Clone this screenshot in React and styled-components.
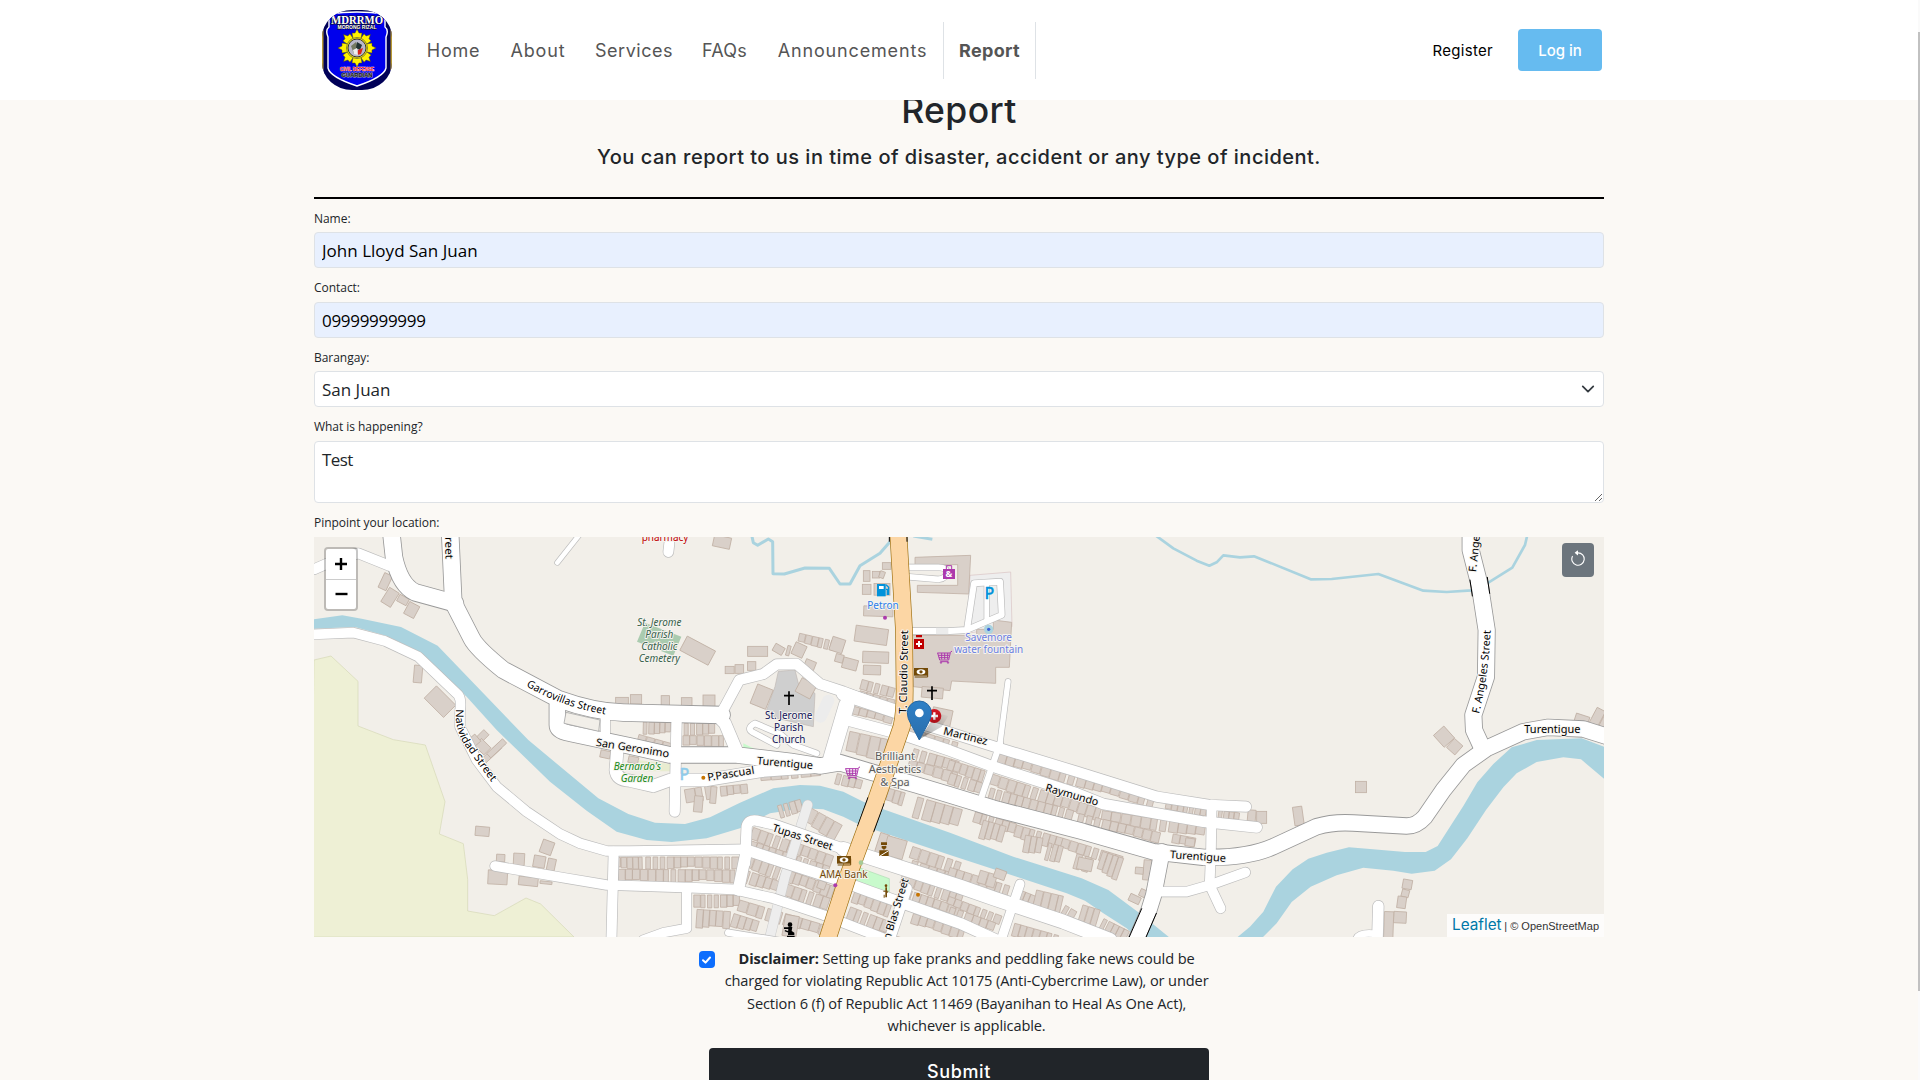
import React from "react";
import styled, { createGlobalStyle, css } from "styled-components";

const display = `Inter, "Open Sans", sans-serif`;
const body = `"Open Sans", "Noto Sans", sans-serif`;

const Global = createGlobalStyle`
  *, *::before, *::after { box-sizing: border-box; }
  html, body { margin: 0; height: 100%; overflow: hidden; }
  body { background: #fbf9f5; color: #212529; font-family: ${body}; }
`;

const Page = styled.div`
  height: 1080px;
  overflow: hidden;
  background: #fbf9f5;
`;
const Header = styled.header`
  position: relative;
  z-index: 2;
  height: 100px;
  background: #fff;
`;
const Bar = styled.div`
  width: 1290px;
  height: 100px;
  margin-left: 314px;
  padding: 0 2px 0 8px;
  display: flex;
  align-items: center;
`;
const Nav = styled.nav`
  display: flex;
  align-items: center;
  margin-left: 20px;
  flex: 1;
`;
const NavLink = styled.a`
  box-sizing: content-box;
  width: ${(p) => p.$w}px;
  height: 57px;
  padding: 0 15px;
  display: flex;
  align-items: center;
  justify-content: center;
  white-space: nowrap;
  color: #555;
  font: 400 18px ${display};
  letter-spacing: ${(p) => p.$ls || 0}px;
  ${(p) =>
    p.$active &&
    css`
      font-weight: 700;
      border: solid #dee2e6;
      border-width: 0 1px;
    `}
`;
const Register = styled.a`
  font: 400 15px ${display};
  color: #000;
  margin-right: 25px;
  letter-spacing: 0.3px;
`;
const Login = styled.button`
  width: 84px;
  height: 42px;
  border: 0;
  border-radius: 4px;
  background: #66bbf0;
  color: #fff;
  font: 500 15px ${display};
`;

const Main = styled.main`
  width: 1290px;
  margin-left: 314px;
  display: flex;
  flex-direction: column;
`;
const Title = styled.h1`
  margin: -13px 0 0;
  text-align: center;
  font: 500 35.5px/48px ${display};
  letter-spacing: 0.4px;
`;
const Subtitle = styled.p`
  margin: 7px 0 0;
  height: 31px;
  text-align: center;
  white-space: nowrap;
  font: 500 20px/31px ${display};
  letter-spacing: 0.49px;
`;
const Rule = styled.hr`
  margin: 24px 0 0;
  width: 100%;
  border: 0;
  height: 2px;
  background: #000;
`;
const Field = styled.label`
  display: flex;
  flex-direction: column;
  height: ${(p) => p.$h}px;
`;
const Caption = styled.span`
  flex: 1;
  display: flex;
  align-items: center;
  padding-top: 5px;
  font-size: 12px;
  letter-spacing: -0.04px;
`;
const control = css`
  width: 100%;
  border: 1px solid #dee2e6;
  border-radius: 4px;
  padding: 0 7px;
  font: 400 17px/27px ${body};
  letter-spacing: ${(p) => p.$ls ?? -0.4}px;
  color: #212529;
  outline: 0;
`;
const Input = styled.input`
  ${control}
  height: 36px;
  color: #000;
  background: #e8f0fe;
`;
const Select = styled.div`
  ${control}
  height: 36px;
  background: #fff;
  display: flex;
  align-items: center;
  justify-content: space-between;
  padding-right: 8px;
`;
const Area = styled.textarea`
  ${control}
  height: 62px;
  padding-top: 4px;
  background: #fff;
  resize: vertical;
  display: block;
`;
const MapCaption = styled(Caption)`
  flex: none;
  height: 34px;
`;

const MapBox = styled.section`
  position: relative;
  width: 1290px;
  height: 400px;
  overflow: hidden;
  background: #f2efe9;
  > svg { display: block; }
`;
const ZoomControl = styled.div`
  position: absolute;
  left: 10px;
  top: 10px;
  width: 34px;
  height: 64px;
  border: 2px solid rgba(0, 0, 0, 0.22);
  border-radius: 4px;
  background: #fff;
  background-clip: padding-box;
`;
const ZoomButton = styled.button`
  display: flex;
  align-items: center;
  justify-content: center;
  width: 30px;
  height: 30px;
  padding: 0;
  border: 0;
  background: none;
  & + & { border-top: 1px solid #ccc; padding-bottom: 2px; }
`;
const Reset = styled.button`
  position: absolute;
  right: 10px;
  top: 6px;
  width: 32px;
  height: 34px;
  padding: 0 0 2px;
  border: 0;
  border-radius: 4px;
  background: #6c757d;
  display: flex;
  align-items: center;
  justify-content: center;
`;
const Attribution = styled.div`
  position: absolute;
  right: 0;
  bottom: 0;
  width: 157px;
  height: 23px;
  padding: 0 5px;
  display: flex;
  align-items: center;
  justify-content: space-between;
  white-space: nowrap;
  background: rgba(255, 255, 255, 0.8);
  font: 11px "Liberation Sans", Arial, sans-serif;
  color: #333;
`;
const Leaflet = styled.a`
  font: 400 15.3px ${display};
  color: #0078a8;
  margin-top: -2px;
`;

const Consent = styled.label`
  display: flex;
  align-self: center;
  width: 510px;
  margin: 10px 0 0 -11px;
  gap: 10px;
`;
const Check = styled.span`
  width: 17px;
  height: 17px;
  margin-top: 4px;
  border-radius: 4px;
  background: #0d6efd;
  display: flex;
  align-items: center;
  justify-content: center;
`;
const Notice = styled.p`
  margin: 0;
  flex: 1;
  height: 91px;
  text-align: center;
  white-space: nowrap;
  font-size: 14.6px;
  line-height: 22.4px;
  letter-spacing: -0.12px;
`;
const Submit = styled.button`
  align-self: center;
  width: 500px;
  height: 46px;
  margin-top: 10px;
  border: 0;
  border-radius: 4px;
  background: #212529;
  color: #fff;
  font: 500 18px/46px ${display};
  letter-spacing: 0.6px;
`;
const ScrollTrack = styled.div`
  position: fixed;
  z-index: 5;
  right: 0;
  top: 0;
  width: 2px;
  height: 1080px;
  background: #fafafa;
`;
const ScrollThumb = styled.div`
  margin-top: 32px;
  height: 959px;
  background: #c1c1c1;
`;

function Logo() {
  const rays = Array.from({ length: 8 }, (_, i) => i * 45);
  return (
    <svg width="70" height="80" viewBox="0 0 70 80">
      <defs>
        <clipPath id="oval"><rect width="70" height="80" rx="30" ry="27" /></clipPath>
      </defs>
      <g clipPath="url(#oval)">
        <rect width="70" height="80" fill="#000058" />
        <path d="M0 20h1.500v40H0zM68.500 20h1.500v40h-1.500z" fill="#b99a35" />
        <path d="M7 4Q35 0 63 4V17Q67 20 64 27V58Q62 67 35 76Q8 67 6 58V27Q3 20 7 17Z" fill="#0000ec" stroke="#fff" strokeWidth="1.400" />
        <g transform="translate(35 38)" fill="#fff200">
          {rays.map((r) => (
            <path key={r} transform={`rotate(${r})`} d="M-4-9L-5-15L-2-15L0-19L2-15L5-15L4-9Z" stroke="#4b4a00" strokeWidth=".5" />
          ))}
          <circle r="10.500" stroke="#554" strokeWidth=".7" />
          <circle r="9" fill="#b9b8c9" stroke="#333" />
          <path d="M-6-2L-1-6L1 0L-3 6Z" fill="#757a62" />
          <path d="M0-6L5-3L3 2L-1 0Z" fill="#233" />
          <path d="M1 2L6 0L4 6L0 7Z" fill="#d7261c" />
          <path d="M-4 2L0 0L1 7L-3 6Z" fill="#eee" />
        </g>
        <text x="35" y="14" textAnchor="middle" fontFamily="Liberation Serif" fontWeight="700" fontSize="12.500" textLength="52" lengthAdjust="spacingAndGlyphs" fill="#fff" stroke="#111" strokeWidth="1.200" paintOrder="stroke">MDRRMO</text>
        <text x="35" y="18.700" textAnchor="middle" fontFamily="Liberation Sans" fontWeight="700" fontSize="4.800" textLength="39" lengthAdjust="spacingAndGlyphs" fill="#fff" stroke="#111" strokeWidth=".8" paintOrder="stroke">MORONG RIZAL</text>
        <text x="35" y="61" textAnchor="middle" fontFamily="Liberation Sans" fontWeight="700" fontSize="5" textLength="34" lengthAdjust="spacingAndGlyphs" fill="#ff2020" stroke="#eee" strokeWidth=".6" paintOrder="stroke">CIVIL DEFENSE</text>
        <text x="35" y="67" textAnchor="middle" fontFamily="Liberation Sans" fontWeight="700" fontSize="6" textLength="31" lengthAdjust="spacingAndGlyphs" fill="#111" stroke="#aaa" strokeWidth="1" paintOrder="stroke">GUARDIAN</text>
      </g>
    </svg>
  );
}

/* Street casings and fills: [path, width]. Three map units per pixel. */
const roads = [
  ["M12 118L80 88L145 70L240 108", 30],
  ["M810 12L742 98", 14],
  ["M1078 40L1075 66", 30],
  ["M12 313L130 308L225 333L325 380L445 495Q455 510 450 545L450 590L500 690L560 770L650 845L750 912L810 940L890 963H960L1290 958", 29],
  ["M1305 1000L1310 890Q1315 868 1340 872L1390 883L1610 960", 31],
  ["M1600 957L1950 1070L2050 1105L2260 1175L2400 1230", 42],
  ["M1310 960L1430 1000L1580 1048L1680 1085L1950 1180L2060 1230", 33],
  ["M555 1008L770 1045L890 1065L1140 1073L1270 1078L1390 1105L1540 1155L1720 1225", 29],
  ["M1310 960L1285 1080", 34],
  ["M911 965L904 1240", 30],
  ["M1130 1075V1195L1060 1208L1000 1230", 28],
  ["M1255 1208L1420 1235", 20],
  ["M1100 560L1094 845", 31],
  ["M886 550L886 630", 28],
  ["M1230 555L1245 530L1288 450L1360 432L1400 403L1460 402L1530 462L1600 485L1760 545L1820 577L1920 608L2070 655L2300 725L2540 800L2700 825L2808 830", 31],
  ["M1600 492L1760 545", 40],
  ["M1220 555L1245 580L1285 675", 37],
  ["M1560 695L1610 525", 46],
  ["M1610 570L1780 615L1920 662L2050 710L2300 790L2380 822L2680 875L2840 892", 32],
  ["M922 660L917 720Q920 750 960 752L1030 768L1080 750L1190 750L1360 722L1530 710", 37],
  ["M1400 645L1328 607Q1308 595 1335 580L1410 612L1450 645L1520 670", 17],
  ["M1790 1075L1735 1240", 31],
  ["M2094 455L2070 640", 16],
  ["M2070 640L2015 800", 18],
  ["M2705 830L2703 960L2699 1065L2732 1135", 29],
  ["M2550 1085H2630L2700 1065L2806 1027", 29],
  ["M2130 1062L2107 1130L2070 1240", 27],
  ["M1790 112H1885Q1910 112 1910 128T1885 148L1790 140", 17],
  ["M1800 303L1920 303L1970 300L2075 255Q2075 245 2070 155L1992 160L1972 292", 18],
  ["M2030 165V268", 14],
  ["M3205 1128L3202 1240", 32],
  ["M3140 1225Q3150 1205 3200 1212", 20],
];
const mains = [
  ["M243 0L252 82Q270 165 315 187L435 220", 50],
  ["M420 0L430 218L485 325Q500 355 580 420L745 507Q850 545 940 548L1235 555", 50],
  ["M742 525V585Q742 603 780 610L960 648L1080 675H1280L1440 694L1530 708L1590 698L1680 725L1820 765L1920 795L2050 835L2320 905L2530 965L2680 982Q2810 985 2890 950L3020 890Q3070 875 3130 879L3290 888Q3320 888 3345 860L3400 780L3460 705L3530 655L3640 605L3715 592L3820 597L3900 622", 47],
  ["M3482 0V60L3510 170L3530 300L3528 440L3490 555L3492 600L3515 650", 49],
  ["M2556 965L2531 1095L2517 1140L2476 1235", 46],
];
const TRUNK = "M1765 10L1782 300L1784 480Q1784 550 1775 590L1695 820L1610 1050L1550 1235";

/* Building strips: [x1, y1, x2, y2, depth, count]. */
const strips = [
  [1470, 310, 1600, 340, 28, 7], [998, 576, 1084, 578, 36, 5], [990, 614, 1082, 640, 28, 4],
  [1120, 580, 1215, 580, 35, 5], [1120, 617, 1245, 617, 34, 6], [1120, 780, 1210, 765, 40, 3],
  [1230, 770, 1312, 762, 32, 4], [1350, 735, 1530, 720, 18, 6], [1625, 527, 1750, 562, 24, 5],
  [1620, 604, 1740, 630, 66, 4], [1580, 730, 1660, 752, 32, 4], [1720, 770, 1790, 790, 40, 4],
  [1820, 800, 1960, 840, 62, 5], [1800, 595, 1950, 640, 24, 6], [1810, 655, 1950, 695, 34, 6],
  [1800, 690, 1950, 730, 34, 6], [1655, 448, 1755, 475, 30, 5], [1650, 482, 1755, 510, 30, 5],
  [1330, 892, 1570, 978, 38, 11], [1322, 932, 1560, 1010, 32, 12], [1315, 978, 1580, 1072, 38, 13],
  [1305, 1020, 1560, 1105, 38, 12], [1505, 835, 1595, 885, 55, 4], [1400, 828, 1470, 808, 38, 4],
  [900, 983, 1000, 981, 36, 6], [1005, 981, 1285, 981, 36, 13], [925, 1018, 1280, 1020, 38, 16],
  [1150, 1095, 1290, 1095, 38, 7], [1160, 1138, 1262, 1145, 58, 5], [1290, 1110, 1560, 1190, 36, 10],
  [1270, 1150, 1350, 1175, 40, 4], [1810, 950, 1960, 1000, 42, 6], [1805, 990, 1960, 1040, 30, 6],
  [1780, 1035, 1960, 1096, 33, 9], [1770, 1072, 1960, 1135, 32, 9], [1635, 1085, 1750, 1125, 40, 6],
  [1620, 1130, 1740, 1175, 40, 6], [1810, 1150, 1970, 1200, 34, 7], [1700, 1200, 1780, 1225, 30, 4],
  [2065, 668, 2540, 805, 32, 18], [2570, 812, 2690, 834, 27, 7], [2725, 841, 2790, 849, 24, 4],
  [2050, 733, 2380, 838, 38, 14], [2040, 773, 2290, 842, 40, 12], [2380, 842, 2690, 890, 34, 11],
  [2305, 850, 2550, 908, 32, 10], [2590, 912, 2660, 925, 30, 3], [1995, 845, 2120, 882, 32, 6],
  [2020, 870, 2090, 890, 60, 4], [2120, 885, 2260, 925, 38, 7], [2145, 915, 2200, 925, 52, 3],
  [2260, 925, 2440, 980, 32, 8], [2215, 938, 2260, 950, 52, 3], [2380, 965, 2440, 985, 70, 4],
  [2298, 970, 2350, 985, 45, 2], [1920, 690, 2030, 724, 36, 6], [1920, 728, 2020, 760, 34, 5],
  [1920, 1012, 2105, 1070, 32, 8], [2010, 1020, 2060, 1035, 40, 2], [2130, 1080, 2180, 1100, 40, 3],
  [2180, 1080, 2265, 1100, 58, 4], [2265, 1125, 2300, 1145, 40, 2], [2320, 1125, 2370, 1140, 60, 3],
  [2380, 1165, 2460, 1205, 40, 5], [1920, 1100, 2075, 1158, 28, 8], [1920, 1130, 2060, 1180, 30, 6],
  [2115, 1180, 2250, 1218, 45, 7],
];
/* Detached buildings: [cx, cy, w, h, angle]. */
const blocks = [
  [226, 155, 26, 48, 25], [240, 202, 34, 50, 32], [279, 210, 32, 22, 28], [305, 240, 34, 40, 28],
  [324, 432, 25, 52, 5], [390, 515, 82, 52, 45], [518, 618, 32, 22, -45], [518, 650, 30, 40, -45], [540, 675, 80, 18, -43], [560, 655, 65, 18, -43], [495, 630, 22, 28, -40],
  [517, 904, 42, 28, 5], [711, 952, 36, 40, 20], [572, 984, 25, 22, 3], [627, 988, 33, 36, 3], [688, 995, 35, 35, 10], [724, 1004, 24, 36, 12],
  [563, 1042, 58, 42, 3], [655, 1054, 58, 26, 6], [708, 1058, 36, 8, 6], [886, 673, 30, 22, 12], [970, 690, 30, 20, 12],
  [936, 513, 38, 22, 0], [978, 508, 34, 28, 0], [1066, 512, 25, 30, 0], [1130, 516, 32, 26, 0], [1197, 512, 36, 34, 0],
  [1236, 36, 52, 34, 12], [1163, 362, 96, 48, 28], [1343, 364, 60, 30, 0], [1406, 358, 32, 24, 30], [1467, 360, 36, 38, 25], [1435, 362, 10, 30, 15],
  [1259, 420, 27, 22, 0], [1288, 417, 26, 26, 0], [1325, 408, 25, 26, 0], [1500, 404, 32, 26, 22], [1582, 345, 40, 42, 18], [1620, 402, 45, 32, 15],
  [1684, 316, 98, 48, 8], [1697, 382, 78, 34, 2], [1686, 420, 52, 28, 2], [1588, 385, 24, 24, 15],
  [1670, 138, 20, 32, 0], [1698, 134, 22, 20, 0], [1716, 134, 15, 20, 20], [1730, 108, 26, 20, 0], [1670, 178, 26, 30, 0], [1716, 178, 48, 35, 0], [1705, 244, 88, 30, 2],
  [1355, 500, 50, 62, 22], [1488, 475, 50, 46, 28], [1165, 822, 26, 48, 5], [1210, 795, 18, 50, 5],
  [1867, 488, 64, 32, 5], [1895, 560, 60, 48, 12], [1715, 945, 28, 70, 18], [1755, 953, 60, 58, 16],
  [1442, 1188, 42, 64, 10], [1535, 1065, 24, 24, 20], [2825, 857, 24, 34, 5], [2855, 862, 30, 36, 0], [2640, 937, 28, 24, 8],
  [2512, 1020, 24, 60, 5], [2488, 1022, 24, 20, 5], [2500, 1090, 22, 22, 25], [2474, 1107, 34, 22, 25], [2325, 1003, 45, 36, 12],
  [2070, 1033, 34, 28, 20], [3402, 620, 48, 42, 48], [3434, 650, 34, 36, 42], [3153, 771, 33, 34, 0], [2965, 858, 28, 56, -8],
  [3292, 1063, 28, 28, 10], [3286, 1090, 22, 22, 15], [3275, 1117, 26, 35, 8], [3270, 1162, 38, 34, 3], [3236, 1185, 28, 80, 2],
  [3815, 570, 42, 30, 18], [3860, 565, 28, 60, 28], [3885, 580, 26, 60, 28],
];

function stripQuads([x1, y1, x2, y2, d, n], k) {
  const len = Math.hypot(x2 - x1, y2 - y1);
  const ux = (x2 - x1) / len, uy = (y2 - y1) / len;
  const out = [];
  for (let i = 0; i < n; i++) {
    const noise = Math.abs(Math.sin((i + 1) * 12.9 + k * 7.7));
    const a = ((i + (noise - 0.5) * 0.25) * len) / n;
    const b = a + (len / n) * (noise > 0.93 ? 0.65 : 0.98);
    const dep = d * (0.76 + noise * 0.26);
    out.push(
      `M${x1 + ux * a} ${y1 + uy * a}L${x1 + ux * b} ${y1 + uy * b}L${x1 + ux * b - uy * dep} ${y1 + uy * b + ux * dep}L${x1 + ux * a - uy * dep} ${y1 + uy * a + ux * dep}Z`
    );
  }
  return out.join("");
}

const halo = { stroke: "#f6f4f0", strokeWidth: 6, paintOrder: "stroke", strokeLinejoin: "round" };

function Label({ x, y, w, children, fill = "#000", size = 32, rotate, italic }) {
  return (
    <text
      x={x} y={y} textAnchor="middle" fontSize={size} fill={fill}
      fontStyle={italic ? "italic" : undefined}
      textLength={w} lengthAdjust="spacingAndGlyphs"
      transform={rotate ? `rotate(${rotate} ${x} ${y})` : undefined}
      {...halo}
    >
      {children}
    </text>
  );
}

function PathLabel({ id, d, w, children }) {
  return (
    <>
      <path id={id} d={d} fill="none" />
      <text fontSize="32" {...halo} stroke="#fff">
        <textPath href={`#${id}`} textLength={w} lengthAdjust="spacingAndGlyphs">{children}</textPath>
      </text>
    </>
  );
}

function Cart({ x, y }) {
  return (
    <g transform={`translate(${x} ${y})`} fill="none" stroke="#ac39ac" strokeWidth="3">
      <path d="M-21-13H17M-18-6H15M-16 1H13M-20-13L-14 8H13L18-14Q19-18 23-18M-8-13V6M1-13V6M10-13V6M-12 13H12" />
      <circle cx="-10" cy="16" r="2" /><circle cx="11" cy="16" r="2" />
    </g>
  );
}
function Bank({ x, y }) {
  return (
    <g transform={`translate(${x} ${y})`}>
      <rect x="-21" y="-14" width="42" height="23" fill="#734a08" />
      <ellipse cx="0" cy="-2.500" rx="13" ry="8" fill="#fff" /><circle cy="-2.500" r="5" fill="#734a08" />
      <path d="M-19 13H20V-6" fill="none" stroke="#734a08" strokeWidth="3" />
    </g>
  );
}
function Cross({ x, y }) {
  return <path d={`M${x} ${y - 20}V${y + 21}M${x - 15} ${y - 7}H${x + 15}`} stroke="#000" strokeWidth="5" />;
}

function StreetMap() {
  return (
    <svg width="1290" height="400" viewBox="12 21 3870 1200" fontFamily='"Noto Sans", sans-serif'>
      <defs>
        <linearGradient id="pin" x1="0" y1="0" x2="0" y2="1">
          <stop offset="0" stopColor="#2e80c7" /><stop offset="1" stopColor="#2a6eab" />
        </linearGradient>
        <linearGradient id="shade" x1="0" y1="1" x2="1" y2="0">
          <stop offset="0" stopColor="#000" stopOpacity=".4" /><stop offset="1" stopColor="#000" stopOpacity="0" />
        </linearGradient>
      </defs>
      <rect x="0" y="0" width="3900" height="1240" fill="#f2efe9" />
      <path d="M12 390L63 378L144 454V588L250 629L346 645L405 815L388 912L460 941L473 1048V1143L553 1157L648 1104L692 1122L792 1221H0Z" fill="#eef0d5" stroke="#d5d8b5" strokeWidth="2" />
      <path d="M981 335L1005 278L1114 320L1090 377Z" fill="#aacbaf" />
      <path d="M1980 136L2102 126L2106 290L1970 310Z" fill="#eeeeee" stroke="#d9c3c3" strokeWidth="2" />
      <g fill="#aad3df">
        <path d="M0 269L97 256L155 266L273 291L383 347L520 490L655 630L865 805L955 852L1035 878L1125 882L1200 862L1290 818L1390 775L1470 765L1530 767L1600 785L1660 815L1720 838L1920 908L2110 980L2315 1045L2395 1080L2485 1147L2600 1240H2500L2450 1195L2380 1150L2325 1112L2270 1090L2120 1040L1920 975L1695 900L1650 885L1600 860L1540 838L1480 835L1380 850L1290 895L1190 925L1085 936L1010 930L920 905L830 842L720 755L560 600L470 500L330 366L230 318L135 291L0 297Z" />
        <path d="M2760 1240L2820 1190L2860 1145L2898 1070L2948 1018L2995 986L3050 968L3117 952L3180 957L3285 966H3347L3383 948L3420 890L3460 828L3502 757L3550 702L3605 652L3680 630L3815 625L3890 653V753L3813 688L3760 682L3680 696L3620 730L3580 772L3528 840L3472 925L3423 988L3374 1022L3305 1031L3250 1022L3160 1013L3080 1036L3002 1070L2945 1116L2900 1180L2840 1240Z" />
      </g>
      <g fill="none" stroke="#aad3df" strokeWidth="9" strokeLinejoin="round">
        <path d="M1325 15L1330 38L1343 46L1375 27L1388 35L1389 131L1423 132L1485 114L1558 115L1590 162H1620L1650 107L1710 70L1740 35" />
        <path d="M1810 18L1867 28" />
        <path d="M2535 15L2590 55L2660 92L2698 107L2720 97L2740 76L2790 82L2832 79L2880 98L3002 148L3065 147L3205 132L3340 182L3410 186L3485 181L3535 158L3607 113L3645 45L3652 15" strokeWidth="8" />
      </g>
      <path d="M1405 424L1455 420L1465 460L1515 490L1510 590L1380 560L1368 545L1395 470Z" fill="#cfcfcf" stroke="#bfb8b4" strokeWidth="2" />
      <g fill="#d9d0c9" stroke="#c0b0a4" strokeWidth="2.400">
        <path d="M1815 82L1982 76L1976 192L1822 187V166H1943V104H1815Z" />
        <path d="M1805 316H2000V298H2050V270L2105 277L2098 412H2057V460L1925 453L1920 482L1810 470Z" />
        {strips.map((s, i) => <path key={i} d={stripQuads(s, i)} />)}
        {blocks.map(([x, y, w, h, r], i) => (
          <rect key={i} x={x - w / 2} y={y - h / 2} width={w} height={h} transform={`rotate(${r} ${x} ${y})`} />
        ))}
      </g>
      <path d="M1300 640L1345 662H1300Z" fill="#c8facc" />
      <path d="M985 690L1080 702V724H1000Z" fill="#e8ecd0" />
      <path d="M1645 1012L1738 1046V1090L1640 1055Z" fill="#c8facc" stroke="#9fd3a5" strokeWidth="1.500" />
      <g fill="none" strokeLinecap="round" strokeLinejoin="round">
        <path d="M1493 825L1425 1040L1375 1240" stroke="#ccc" strokeWidth="31" />
        <path d="M1493 825L1425 1040L1375 1240" stroke="#ededed" strokeWidth="28" />
        <path d="M1555 512L1532 560" stroke="#ececec" strokeWidth="36" />
        {roads.map(([d, w], i) => <path key={i} d={d} stroke="#bdbdbd" strokeWidth={w + 4} />)}
        {mains.map(([d, w], i) => <path key={i} d={d} stroke="#999" strokeWidth={w + 5} />)}
        {roads.map(([d, w], i) => <path key={i} d={d} stroke="#fff" strokeWidth={w} />)}
        {mains.map(([d, w], i) => <path key={i} d={d} stroke="#fff" strokeWidth={w} />)}
        <path d={TRUNK} stroke="#9f7112" strokeWidth="53" />
        <path d="M1698 811L1667 897" stroke="#000" strokeWidth="54" strokeLinecap="butt" />
        <path d={TRUNK} stroke="#fcd6a4" strokeWidth="49" />
        <path d="M2495 1136L2452 1234M2539 1150L2500 1240M3480 150L3487 198M3532 142L3539 190M1738 21V34M1791 21V34" stroke="#000" strokeWidth="3" />
        <path d="M1878 303H1915" stroke="#ececec" strokeWidth="19" strokeLinecap="butt" />
      </g>
      <path d="M728 525V575" stroke="#fff" strokeWidth="12" />
      <path d="M768 547L870 570L866 604L762 580Z" fill="#f2efe9" stroke="#aaa" strokeWidth="2.500" />

      <PathLabel id="garrovillas" d="M648 468Q760 535 915 558" w={254}>Garrovillas Street</PathLabel>
      <PathLabel id="natividad" d="M438 538Q432 610 478 664Q530 738 560 776" w={250}>Natividad Street</PathLabel>
      <Label x={966} y={665} w={222} rotate={9}>San Geronimo</Label>
      <Label x={1424} y={710} w={168} rotate={5}>Turentigue</Label>
      <Label x={1264} y={742} w={142} rotate={-9}>P.Pascual</Label>
      <Label x={1475} y={932} w={188} rotate={18}>Tupas Street</Label>
      <Label x={1792} y={426} w={250} rotate={-89}>T. Claudio Street</Label>
      <Label x={1768} y={1140} w={192} rotate={-73}>n Blas Street</Label>
      <Label x={1964} y={629} w={135} rotate={14}>Martinez</Label>
      <Label x={2283} y={805} w={164} rotate={16}>Raymundo</Label>
      <Label x={2663} y={990} w={168} rotate={4}>Turentigue</Label>
      <Label x={3727} y={608} w={168}>Turentigue</Label>
      <Label x={3504} y={72} w={110} rotate={-84}>F. Ange</Label>
      <PathLabel id="angeles" d="M3507 552Q3535 440 3542 300" w={254}>F. Angeles Street</PathLabel>
      <Label x={406} y={54} w={66} rotate={89}>reet</Label>
      <Label x={1065} y={34} w={140} fill="#bf0000">pharmacy</Label>
      {[["St. Jerome", 132], ["Parish", 84], ["Catholic", 108], ["Cemetery", 124]].map(([t, w], i) => (
        <Label key={t} x={1048} y={289 + i * 36} w={w} size={31} fill="#36604a" italic>{t}</Label>
      ))}
      {[["St. Jerome", 142], ["Parish", 88], ["Church", 100]].map(([t, w], i) => (
        <Label key={t} x={1436} y={567 + i * 36} w={w} fill="#14145a">{t}</Label>
      ))}
      {[["Brilliant", 120], ["Aesthetics", 158], ["& Spa", 88]].map(([t, w], i) => (
        <Label key={t} x={1755} y={690 + i * 39} w={w} size={34} fill="#5b5b5b">{t}</Label>
      ))}
      <Label x={982} y={719} w={142} fill="#188a18" italic>Bernardo's</Label>
      <Label x={981} y={755} w={98} fill="#188a18" italic>Garden</Label>
      <Label x={1719} y={236} w={94} fill="#2b7de9">Petron</Label>
      <Label x={2036} y={333} w={140} size={30} fill="#6b7ee0">Savemore</Label>
      <Label x={2036} y={369} w={207} size={30} fill="#6b7ee0">water fountain</Label>
      <Label x={1601} y={1043} w={144} fill="#734a08">AMA Bank</Label>
      <text x="2038" y="206" textAnchor="middle" fontSize="48" fontWeight="500" fill="#0092da" stroke="#0092da">P</text>
      <text x="1123" y="749" textAnchor="middle" fontSize="48" fontWeight="500" fill="#8fcbea" stroke="#8fcbea">P</text>

      <Cross x={1437} y={504} /><Cross x={1866} y={489} />
      <Cart x={1903} y={382} /><Cart x={1627} y={729} />
      <Bank x={1833} y={428} /><Bank x={1602} y={992} />
      <g fill="#0092da">
        <path d="M1701 162H1727V199H1701Z" /><path d="M1707 168H1721V177H1707Z" fill="#fff" />
        <path d="M1728 164L1736 172V193H1732V178H1728" fill="none" stroke="#0092da" strokeWidth="4" />
      </g>
      <g>
        <rect x="1899" y="117" width="36" height="30" fill="#ac39ac" />
        <path d="M1909 117V107H1925V117" fill="none" stroke="#ac39ac" strokeWidth="3" />
        <text x="1917" y="142" textAnchor="middle" fill="#fff" fontWeight="700" fontSize="27">&amp;</text>
      </g>
      <path d="M1812 327H1842V357H1812ZM1818 315H1836V322H1818Z" fill="#bf0000" />
      <path d="M1827 333V351M1818 342H1836" stroke="#fff" strokeWidth="6" />
      <circle cx="1873" cy="558" r="21" fill="#cf1420" />
      <path d="M1873 547V569M1862 558H1884" stroke="#fff" strokeWidth="7" />
      <circle cx="2036" cy="298" r="14" fill="#aad3df" /><circle cx="2036" cy="298" r="5" fill="#3b5fd9" />
      <g fill="#ac39ac"><circle cx="1725" cy="263" r="6" /><circle cx="1576" cy="1066" r="6" /></g>
      <g fill="#c77400"><circle cx="1180" cy="743" r="6" /><circle cx="1824" cy="1094" r="6" /></g>
      <circle cx="1653" cy="998" r="7" fill="#a5ca96" />
      <g fill="#734a08">
        <path d="M1713 937H1731V945H1713ZM1715 948H1729V954L1722 959L1715 954ZM1708 961H1736V978H1708Z" />
        <path d="M1710 978L1736 962" stroke="#fff" strokeWidth="3" />
        <circle cx="1728" cy="1067" r="4" />
        <path d="M1726 1072H1731V1086H1733V1089H1731V1102H1726ZM1720 1082H1735V1085H1720ZM1721 1094H1724V1103H1721Z" />
      </g>
      <g fill="#000">
        <circle cx="1440" cy="1184" r="7" />
        <path d="M1435 1191H1447L1445 1203L1453 1208V1215H1434ZM1422 1192H1437V1197H1422ZM1425 1200L1436 1204V1208L1424 1204ZM1431 1217H1454V1221H1431Z" />
      </g>
      <path d="M1828 628L1880 548L1915 558L1895 590Z" fill="url(#shade)" />
      <path d="M1828 630L1803 583Q1792 565 1792 548A36 35 0 0 1 1864 548Q1864 565 1853 583Z" fill="url(#pin)" stroke="#2467a3" strokeWidth="3" />
      <circle cx="1828" cy="549" r="13" fill="#fff" />
    </svg>
  );
}

const links = [
  ["Home", 53, 0.75], ["About", 56, 0.85], ["Services", 76, 0.55], ["FAQs", 45, 0.3], ["Announcements", 151, 0.85],
];

export default function App() {
  return (
    <Page>
      <Global />
      <Header>
        <Bar>
          <Logo />
          <Nav>
            {links.map(([t, w, ls]) => <NavLink key={t} $w={w} $ls={ls}>{t}</NavLink>)}
            <NavLink $w={61} $ls={0.3} $active>Report</NavLink>
          </Nav>
          <Register>Register</Register>
          <Login>Log in</Login>
        </Bar>
      </Header>
      <Main>
        <Title>Report</Title>
        <Subtitle>You can report to us in time of disaster, accident or any type of incident.</Subtitle>
        <Rule />
        <Field $h={69}><Caption>Name:</Caption><Input $ls={0.02} defaultValue="John Lloyd San Juan" /></Field>
        <Field $h={70}><Caption>Contact:</Caption><Input $ls={-0.3} defaultValue="09999999999" /></Field>
        <Field $h={69}>
          <Caption>Barangay:</Caption>
          <Select $ls={0}>
            San Juan
            <svg width="14" height="14" viewBox="0 0 16 16" fill="none" stroke="#343a40" strokeWidth="2" strokeLinecap="round" strokeLinejoin="round">
              <path d="m2 5 6 6 6-6" />
            </svg>
          </Select>
        </Field>
        <Field $h={96}><Caption>What is happening?</Caption><Area $ls={-0.6} defaultValue="Test" /></Field>
        <MapCaption>Pinpoint your location:</MapCaption>
        <MapBox>
          <StreetMap />
          <ZoomControl>
            <ZoomButton><svg width="14" height="14"><path d="M7 1V13M1 7H13" stroke="#000" strokeWidth="2.400" /></svg></ZoomButton>
            <ZoomButton><svg width="14" height="14"><path d="M1.500 7H13.500" stroke="#000" strokeWidth="2.400" /></svg></ZoomButton>
          </ZoomControl>
          <Reset>
            <svg width="18" height="18" viewBox="0 0 16 16" fill="#fff">
              <path fillRule="evenodd" d="M8 3a5 5 0 1 1-4.546 2.914.5.5 0 0 0-.908-.417A6 6 0 1 0 8 2z" />
              <path d="M8 4.466V.534a.25.25 0 0 0-.41-.192L5.230 2.308a.25.25 0 0 0 0 .384l2.360 1.966A.25.25 0 0 0 8 4.466" />
            </svg>
          </Reset>
          <Attribution><Leaflet>Leaflet</Leaflet><span>| © OpenStreetMap</span></Attribution>
        </MapBox>
        <Consent>
          <Check>
            <svg width="11" height="10" viewBox="0 0 11 10" fill="none" stroke="#fff" strokeWidth="2" strokeLinecap="round" strokeLinejoin="round">
              <path d="M2 5.300L4.500 7.600L9 2.500" />
            </svg>
          </Check>
          <Notice>
            <b>Disclaimer:</b> Setting up fake pranks and peddling fake news could be<br />
            charged for violating Republic Act 10175 (Anti-Cybercrime Law), or under<br />
            Section 6 (f) of Republic Act 11469 (Bayanihan to Heal As One Act),<br />
            whichever is applicable.
          </Notice>
        </Consent>
        <Submit>Submit</Submit>
      </Main>
      <ScrollTrack><ScrollThumb /></ScrollTrack>
    </Page>
  );
}
